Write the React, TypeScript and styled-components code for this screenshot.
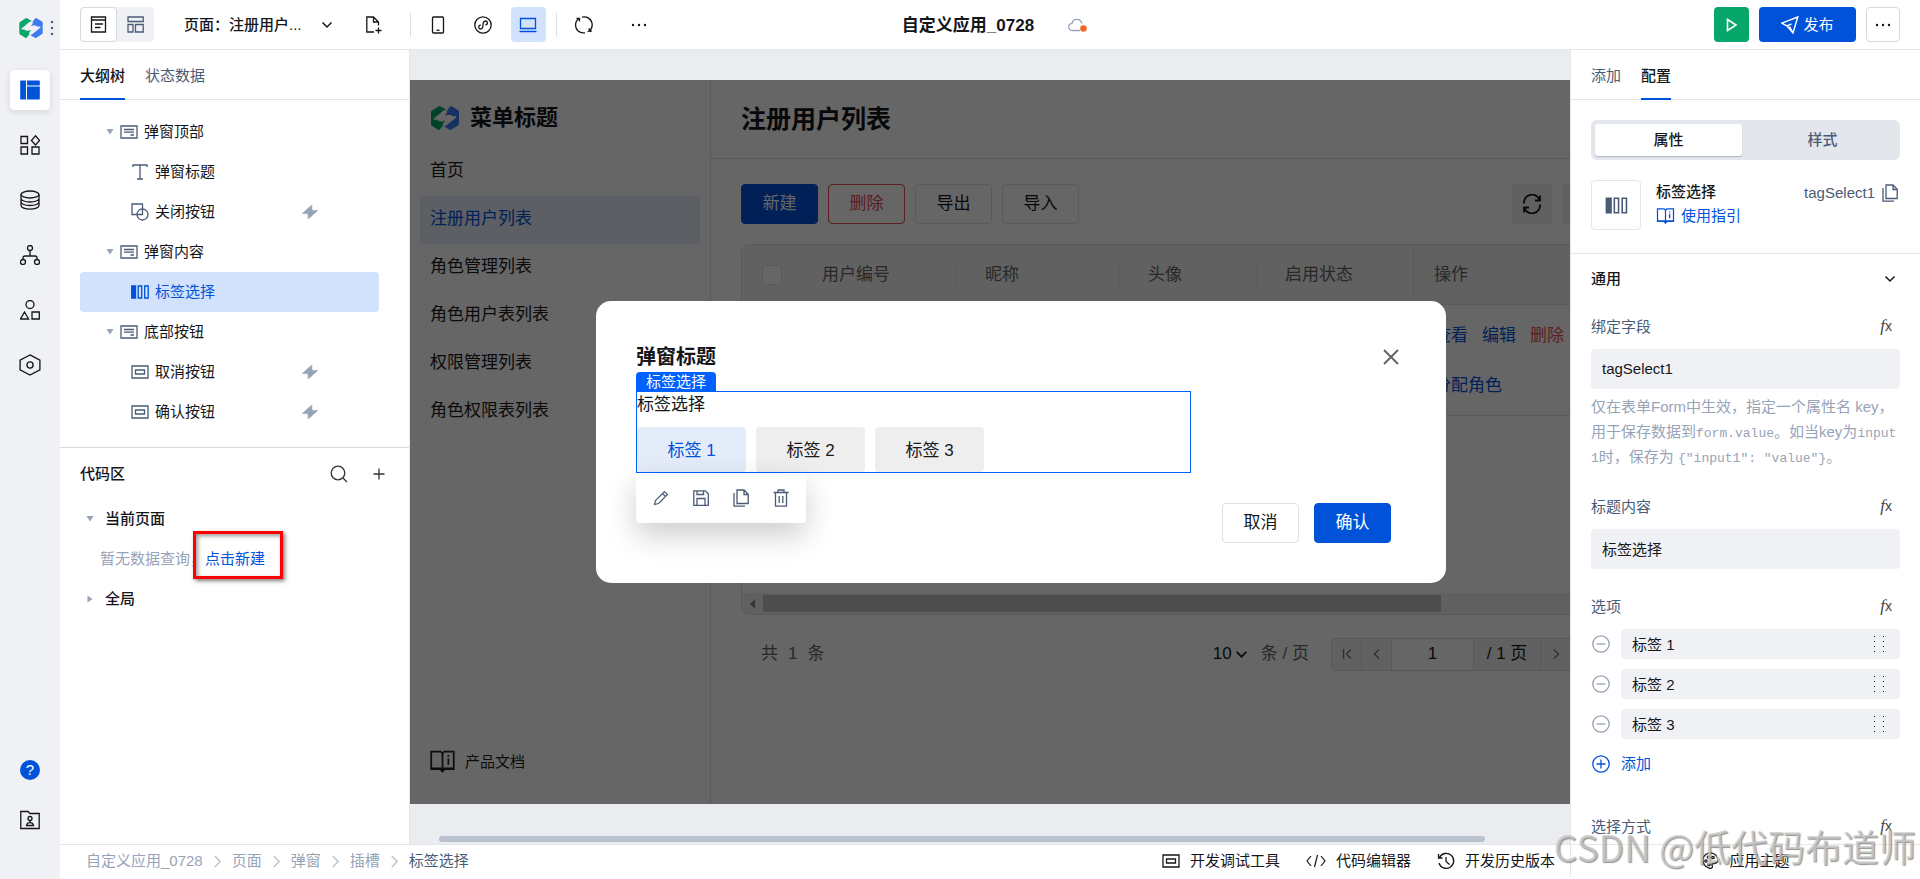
import React, { ReactNode } from 'react';
import styled, { createGlobalStyle, css } from 'styled-components';

const blue = '#0052d9';
const ink = '#14161a';
const slate = '#4b5b76';
const mute = '#97a3b7';
const line = '#e3e6eb';
const appLine = '#e0e0e0';
const canvasText = '17px';

const GlobalStyle = createGlobalStyle`
  *, *::before, *::after { box-sizing: border-box; }
  body {
    margin: 0;
    background: #fff;
    color: ${ink};
    font: 15px/20px 'Liberation Sans', 'Noto Sans CJK SC', sans-serif;
  }
  button, input, select { font: inherit; color: inherit; margin: 0; padding: 0; border: 0; background: none; outline: 0; }
  button { cursor: pointer; }
  a { color: ${blue}; text-decoration: none; }
  h1, h2, h3, p, ul { margin: 0; padding: 0; font: inherit; }
  ul { list-style: none; }
  svg { display: block; flex: none; }
`;

/* ---------- icons ---------- */

type IconProps = { w?: number; h?: number; box?: string; sw?: number; color?: string; children: ReactNode };
const Icon = ({ w = 20, h = 20, box = '0 0 20 20', sw = 1.3, color = 'currentColor', children }: IconProps) => (
  <svg width={w} height={h} viewBox={box} fill="none" stroke={color} strokeWidth={sw} aria-hidden="true">
    {children}
  </svg>
);

const leaf = 'M0 6Q0 5.200.8 4.700L7.500.4Q8.600-.2 9.800.5L15 3.600Q12 4.500 9.500 7L3 12.200Q2 13.200 3.300 14L12.500 18.800 9 23.300Q8 24.400 6.700 23.500L.8 19.800Q0 19.200 0 18.400Z';
const Logo = ({ w, h }: { w: number; h: number }) => (
  <svg width={w} height={h} viewBox="0 0 28 24" aria-hidden="true">
    <path fill="#07a66b" d={leaf} />
    <path fill="#3b7bf0" transform="rotate(180 14 12)" d={leaf} />
    <path fill="#07a66b" d="M3.500 14.200 8.500 10.500Q10 9.800 10.500 11L12.500 18.800Z" opacity="0" />
    <path fill="#3b7bf0" d="M20.200.3 25 9.800 22.500 10.500Q19 7.500 15.200 9.300L13.800 9.800Z" />
    <path fill="#07a66b" d="M7.800 23.700 3 14.200 5.500 13.500Q9 16.500 12.800 14.700L14.200 14.200Z" />
  </svg>
);

const LayoutIcon = () => (
  <svg width="20" height="20" viewBox="0 0 20 20" fill={blue} aria-hidden="true">
    <path d="M1 .5h5v19H1a.8.8 0 0 1-.8-.8V1.3A.8.8 0 0 1 1 .5ZM7 .5h12a.8.8 0 0 1 .8.8v4.200H7ZM7 6.500h12.800v12.200a.8.8 0 0 1-.8.8H7Z" />
  </svg>
);
const BlocksIcon = () => (
  <Icon><path d="M1 1.500h6.500V8.500H1ZM1 12h6.500v7H1ZM12 12h7v7h-7ZM15.500.8 19.600 5.500 15.500 10 11.400 5.500Z" /></Icon>
);
const DatabaseIcon = () => (
  <Icon><ellipse cx="10" cy="4.500" rx="9" ry="3.500" /><path d="M1 4.500v11c0 2 4 3.600 9 3.600s9-1.600 9-3.600v-11M1 8.500c0 2 4 3.500 9 3.500s9-1.500 9-3.500M1 12c0 2 4 3.500 9 3.500s9-1.500 9-3.500" /></Icon>
);
const FlowIcon = () => (
  <Icon><circle cx="10" cy="3" r="2.500" /><circle cx="3" cy="17" r="2.500" /><circle cx="17" cy="17" r="2.500" /><path d="M10 5.500V11M3 14.500V13q0-2 2-2h10q2 0 2 2v1.500" /></Icon>
);
const ShapesIcon = () => (
  <Icon><circle cx="10" cy="4.500" r="4" /><path d="M4.500 12 8.600 19H.5ZM12 12h7.300v7H12Z" /></Icon>
);
const HexIcon = () => (
  <Icon w={22} h={22} sw={1.200}><path d="M10 .8 19 5.500v9L10 19.200 1 14.500v-9Z" /><circle cx="10" cy="10" r="2.800" /></Icon>
);
const FolderUserIcon = () => (
  <Icon><path d="M.8 1.500H8l2 2h9.200v15H.8Z" /><circle cx="10" cy="8.500" r="2" /><path d="M10 10.500v2M6.500 15.500q.5-2.800 3.500-2.800t3.500 2.800Z" /></Icon>
);
const PageIcon = () => (
  <Icon w={17} h={17} box="0 0 17 17"><path d="M1.500 1h14v15h-14ZM1.500 4h14M5 8h8M5 11.500h5.500" /></Icon>
);
const GridIcon = () => (
  <Icon w={17} h={17} box="0 0 17 17"><path d="M1 1h15.200v4.500H1ZM1 8.500h5v7.500H1ZM8.500 8.500h7.700v7.500H8.500Z" /></Icon>
);
const ChevronDown = ({ size = 12, sw = 1.5 }: { size?: number; sw?: number }) => (
  <Icon w={size} h={size} box="0 0 12 12" sw={sw}><path d="M1.500 3.500 6 8l4.500-4.500" /></Icon>
);
const FilePlusIcon = () => (
  <Icon w={18} h={18} box="0 0 18 18"><path d="M9 16H1.800V1H8.500l5 5v3.500M8.500 1v5h5M13.500 11.500v6M10.500 14.500h6" /></Icon>
);
const PhoneIcon = () => (
  <Icon w={14} h={18} box="0 0 14 18"><rect x="1.500" y="1" width="11" height="16" rx="1" /><path d="M5.500 14.300h3" /></Icon>
);
const MiniAppIcon = () => (
  <Icon w={18} h={18} box="0 0 18 18"><circle cx="9" cy="9" r="8.200" /><path d="M6.700 9C3.800 9.500 4.300 13 6.500 13S9 11 9 9s.3-4 2.500-4 2.800 3.500 0 4" /></Icon>
);
const LaptopIcon = () => (
  <Icon w={18} h={16} box="0 0 18 16" color={blue}><path d="M1.500 1.500h15v10h-15ZM.5 14.500h17" /></Icon>
);
const SyncIcon = () => (
  <Icon w={20} h={18} box="0 0 20 18"><path d="M6 16.200A8 8 0 0 1 5 2.500M2.500 2.500H5.500V5.500M8 1.200A8 8 0 0 1 17 13M14 1.800A8 8 0 0 1 15 15.200L17.800 15M15.200 15.500V12.300M6 16.200Q8 17.200 11 16.800" /></Icon>
);
const DotsIcon = () => (
  <svg width="18" height="4" viewBox="0 0 18 4" fill="currentColor" aria-hidden="true"><circle cx="3" cy="2" r="1.200" /><circle cx="9" cy="2" r="1.200" /><circle cx="15" cy="2" r="1.200" /></svg>
);
const VDotsIcon = () => (
  <svg width="4" height="16" viewBox="0 0 4 16" fill={slate} aria-hidden="true"><circle cx="2" cy="2" r="1.200" /><circle cx="2" cy="8" r="1.200" /><circle cx="2" cy="14" r="1.200" /></svg>
);
const CloudIcon = () => (
  <Icon w={20} h={16} box="0 0 20 16" color={mute}><path d="M12 12.500H4.500a3.600 3.600 0 0 1-.5-7.200A5 5 0 0 1 13.800 5.500" /><circle cx="15.500" cy="10.500" r="3.300" fill="#ee6a29" stroke="none" /></Icon>
);
const PlayIcon = () => <Icon w={12} h={16} box="0 0 12 16" sw={1.600}><path d="M1.500 2.500 10 8l-8.500 5.500Z" /></Icon>;
const SendIcon = () => <Icon w={18} h={18} box="0 0 18 18" sw={1.400}><path d="M16.800 1 .8 7.200l5 2.600L12 17ZM5.800 9.800 10.500 8M16.800 1 12 17 8.500 10.500" /></Icon>;
const CaretIcon = ({ right }: { right?: boolean }) => (
  <svg width="8" height="8" viewBox="0 0 8 8" fill={mute} aria-hidden="true"><path d={right ? 'M1.500.5 6.500 4 1.500 7.500Z' : 'M.5 1h7L4 6.500Z'} /></svg>
);
const ContainerIcon = () => <Icon w={18} h={14} box="0 0 18 14" color={slate}><path d="M1 1h16v12H1ZM4 4.500h10M4 7.200h10M10.500 10h3.500" /></Icon>;
const TextIcon = () => <Icon w={18} h={18} box="0 0 18 18" color={slate}><path d="M2 4V2h14v2M9 2v14M6 16h6" /></Icon>;
const ShapeBtnIcon = () => <Icon w={18} h={18} box="0 0 18 18" color={slate}><path d="M1 1h10.500v10.500H1Z" /><circle cx="11.500" cy="11.500" r="5.500" /></Icon>;
const ButtonIcon = ({ color = slate }: { color?: string }) => <Icon w={18} h={14} box="0 0 18 14" color={color}><path d="M1 1h16v12H1ZM4.500 5h9v4h-9Z" /></Icon>;
const TagsIcon = ({ color = blue, w = 18, h = 14 }: { color?: string; w?: number; h?: number }) => (
  <Icon w={w} h={h} box="0 0 18 14" color={color}><path d="M.7 1h3.800v12H.7Z" fill={color} /><path d="M7.200 1h3.500v12H7.200ZM13.700 1h3.500v12h-3.500Z" /></Icon>
);
const BoltIcon = () => <svg width="16" height="14" viewBox="0 0 16 14" fill={mute} aria-hidden="true"><path d="M9.800 0 .3 8.600H6L6.200 14 15.700 5.400H10Z" stroke={mute} strokeWidth=".6" /></svg>;
const SearchIcon = () => <Icon w={18} h={18} box="0 0 18 18" color="#333"><circle cx="8" cy="8" r="6.800" /><path d="m13 13 4 4" /></Icon>;
const PlusIcon = () => <Icon w={12} h={12} box="0 0 12 12" color="#333"><path d="M6 .5v11M.5 6h11" /></Icon>;
const BookIcon = ({ w = 20, h = 18, sw = 1.400 }: { w?: number; h?: number; sw?: number }) => (
  <Icon w={w} h={h} sw={sw} box="0 0 20 18"><path d="M1 1h7.500L10 2.500 11.500 1H19v14h-7L10 17l-2-2H1ZM10 2.500V16M1 14.500h18M14.700 6.500v5M14.700 3.800v1.300" /></Icon>
);
const RefreshIcon = () => <Icon sw={1.800}><path d="M2 9.500A8 8 0 0 1 17.500 6M18 10.500A8 8 0 0 1 2.500 14M18 1.500V6.500H13M2 18.500V13.500H7" /></Icon>;
const CloseIcon = () => <Icon w={16} h={16} box="0 0 16 16" sw={2} color="#666"><path d="m1 1 14 14M15 1 1 15" /></Icon>;
const PencilIcon = () => <Icon w={16} h={16} box="0 0 16 16" sw={1.200} color={slate}><path d="M1.500 14.500 2.500 10.500 11.500 1.500 14.500 4.500 5.500 13.500ZM9.500 3.500l3 3" /></Icon>;
const SaveIcon = () => <Icon w={16} h={16} box="0 0 16 16" color={slate}><path d="M.8.8h11.500l3 3v11.500H.8ZM4 .8v3.700h6.500V.8M4 15.200V8.500h8v6.700" /></Icon>;
const CopyIcon = () => <Icon w={16} h={18} box="0 0 16 18" color={slate}><path d="M4 1h7l4.200 4.200v9.300H4ZM11 1v4.500h4.200M1 4v13.200h11" /></Icon>;
const TrashIcon = () => <Icon w={16} h={18} box="0 0 16 18" color={slate}><path d="M.5 3.500h15M2.500 3.500v13.700h11V3.500M5 3.500V1h6v2.500M6.200 7v7M9.800 7v7" /></Icon>;
const MinusCircle = () => <Icon w={18} h={18} box="0 0 18 18" color={mute}><circle cx="9" cy="9" r="8.200" /><path d="M4.500 9h9" /></Icon>;
const PlusCircle = () => <Icon w={18} h={18} box="0 0 18 18" color={blue}><circle cx="9" cy="9" r="8.200" /><path d="M4.500 9h9M9 4.500v9" /></Icon>;
const GripIcon = () => (
  <svg width="12" height="18" viewBox="0 0 12 18" fill={ink} aria-hidden="true">
    {[1, 6, 11, 16].map(y => <path key={y} d={`M1 ${y}h1v1H1ZM10 ${y}h1v1h-1Z`} />)}
  </svg>
);
const CodeIcon = () => <Icon w={20} h={14} box="0 0 20 14" sw={1.200}><path d="M5 2 1 7l4 5M15 2l4 5-4 5M11.500 1l-3 12" /></Icon>;
const HistoryIcon = () => <Icon w={18} h={18} box="0 0 18 18"><path d="M2.500 5.500A7.500 7.500 0 1 1 2 11M1.500 2v4h4M9 5v4.500l3.500 3" /></Icon>;
const PaletteIcon = () => (
  <Icon w={18} h={18} box="0 0 18 18"><path d="M7 15.500A7.500 7.500 0 1 1 16.800 8c0 3-1.800 3.500-4 3.500-1.800 0-2.300 1-1.500 2.500.8 2-1.800 3.500-4.300 1.500" /><circle cx="5" cy="9" r="1.200" /><circle cx="7.500" cy="5" r="1.200" /><circle cx="12" cy="5.500" r="1.200" /><circle cx="8" cy="12.500" r="1.200" /></Icon>
);
const ArrowIcon = ({ d }: { d: string }) => <Icon w={10} h={12} box="0 0 10 12" sw={1.400}><path d={d} /></Icon>;

/* ---------- shell ---------- */

const Shell = styled.div`
  display: flex;
  height: 100vh;
  overflow: hidden;
  position: relative;
`;
const Rail = styled.nav`
  flex: 0 0 60px;
  display: flex;
  flex-direction: column;
  align-items: center;
  gap: 15px;
  padding-bottom: 39px;
  background: #f0f1f5;
`;
const RailLogo = styled.a`
  display: flex;
  align-items: center;
  gap: 7px;
  height: 55px;
  padding-left: 12px;
`;
const RailButton = styled.button<{ $active?: boolean }>`
  display: flex;
  align-items: center;
  justify-content: center;
  width: 40px;
  height: 40px;
  border-radius: 4px;
  ${p => p.$active && css`
    background: #fff;
    box-shadow: 0 2px 6px rgba(20, 30, 60, 0.12);
  `}
`;
const RailFoot = styled.div`
  display: flex;
  flex-direction: column;
  gap: 10px;
  margin-top: auto;
`;
const HelpDot = styled.span`
  width: 20px;
  height: 20px;
  border-radius: 50%;
  background: ${blue};
  color: #fff;
  text-align: center;
`;
const Main = styled.div`
  flex: 1;
  min-width: 0;
  display: flex;
  flex-direction: column;
`;

/* ---------- top bar ---------- */

const TopBar = styled.header`
  flex: 0 0 50px;
  display: grid;
  grid-template-columns: 1fr auto 1fr;
  align-items: center;
  padding: 0 20px;
  border-bottom: 1px solid ${line};
`;
const BarGroup = styled.div<{ $end?: boolean }>`
  display: flex;
  align-items: center;
  gap: 10px;
  justify-content: ${p => (p.$end ? 'flex-end' : 'flex-start')};
`;
const DeviceGroup = styled.div`
  display: flex;
  align-items: center;
  gap: 10px;
  margin: 0 10px 0 8px;
`;
const ViewToggle = styled.div`
  display: flex;
  border-radius: 4px;
  background: #f0f1f5;
  margin-right: 20px;
`;
const ToggleButton = styled.button<{ $active?: boolean }>`
  display: flex;
  align-items: center;
  justify-content: center;
  width: 37px;
  height: 35px;
  border-radius: 4px;
  color: ${slate};
  ${p => p.$active && css`
    color: ${ink};
    background: #fff;
    border: 1px solid #d5d9e1;
  `}
`;
const PagePicker = styled.button`
  display: flex;
  align-items: center;
  gap: 19px;
  font-weight: 500;
  margin-right: 14px;
`;
const ToolButton = styled.button<{ $active?: boolean }>`
  display: flex;
  align-items: center;
  justify-content: center;
  width: 35px;
  height: 35px;
  border-radius: 4px;
  background: ${p => (p.$active ? '#d2e2fc' : 'none')};
`;
const Separator = styled.span`
  width: 1px;
  height: 24px;
  background: #dcdfe6;
`;
const AppName = styled.div`
  display: flex;
  align-items: center;
  gap: 34px;
  padding: 2px 0 0 10px;
  h1 { font-size: 17px; line-height: 24px; font-weight: 700; }
`;
const RunButton = styled.button`
  display: flex;
  align-items: center;
  justify-content: center;
  width: 35px;
  height: 35px;
  border-radius: 4px;
  background: #07a66b;
  color: #fff;
`;
const PublishButton = styled.button`
  display: flex;
  align-items: center;
  justify-content: center;
  gap: 4px;
  width: 97px;
  height: 35px;
  border-radius: 4px;
  background: ${blue};
  color: #fff;
`;
const MoreButton = styled.button`
  display: flex;
  align-items: center;
  justify-content: center;
  width: 34px;
  height: 35px;
  border: 1px solid #d5d9e1;
  border-radius: 4px;
`;

/* ---------- side panels ---------- */

const Body = styled.div`
  flex: 1;
  min-height: 0;
  display: flex;
`;
const LeftPanel = styled.aside`
  flex: 0 0 350px;
  border-right: 1px solid ${line};
  overflow: hidden;
`;
const RightPanel = styled.aside`
  flex: 0 0 350px;
  border-left: 1px solid ${line};
  overflow: hidden;
`;
const TabBar = styled.div`
  display: flex;
  gap: 20px;
  height: 50px;
  padding: 0 20px;
  border-bottom: 1px solid ${line};
`;
const Tab = styled.button<{ $active?: boolean }>`
  height: 50px;
  padding-top: 3px;
  color: ${p => (p.$active ? ink : slate)};
  font-weight: ${p => (p.$active ? 500 : 400)};
  border-bottom: 2px solid ${p => (p.$active ? blue : 'transparent')};
`;
const Tree = styled.ul`
  padding: 12px 30px 15px 20px;
  border-bottom: 1px solid #d5d9e1;
`;
const TreeRow = styled.li<{ $active?: boolean; $child?: boolean }>`
  display: flex;
  align-items: center;
  gap: 6px;
  height: 40px;
  padding: 0 61px 0 ${p => (p.$child ? 51 : 26)}px;
  border-radius: 4px;
  ${p => p.$active && css`
    background: #d2e2fc;
    color: ${blue};
  `}
  span { flex: 1; }
`;
const CodeHead = styled.div`
  display: flex;
  align-items: center;
  height: 51px;
  padding: 0 24px 0 20px;
  h2 { flex: 1; font-weight: 500; }
  button + button { margin-left: 25px; }
`;
const CodeRow = styled.div<{ $indent?: boolean }>`
  display: flex;
  align-items: center;
  gap: 11px;
  height: 40px;
  padding-left: ${p => (p.$indent ? 40 : 26)}px;
  font-weight: 500;
`;
const EmptyNote = styled.p`
  display: flex;
  font-weight: 400;
  color: ${mute};
`;
const Highlight = styled.span`
  position: relative;
  &::after {
    content: '';
    position: absolute;
    inset: -18px -18px -10px -12px;
    border: 3px solid #f00;
    box-shadow: 2px 2px 4px rgba(0, 0, 0, 0.5), inset 2px 2px 4px rgba(0, 0, 0, 0.4);
    pointer-events: none;
  }
`;

/* ---------- canvas ---------- */

const Canvas = styled.main`
  flex: 1;
  min-width: 0;
  display: flex;
  flex-direction: column;
  padding-top: 30px;
  background: #ebecf0;
  overflow: hidden;
`;
const Frame = styled.div`
  flex: 1;
  min-height: 0;
  width: calc(100% + 62px);
  position: relative;
  display: flex;
  background: #fff;
  font-size: ${canvasText};
`;
const CanvasScroll = styled.div`
  flex: 0 0 40px;
  display: flex;
  align-items: flex-end;
  padding: 0 85px 2px 29px;
  &::after {
    content: '';
    flex: 1;
    height: 6px;
    border-radius: 3px;
    background: #b9c2ce;
  }
`;
const AppMenu = styled.nav`
  flex: 0 0 301px;
  display: flex;
  flex-direction: column;
  padding: 8px 10px 30px;
  border-right: 1px solid ${appLine};
`;
const AppBrand = styled.div`
  display: flex;
  align-items: center;
  gap: 11px;
  height: 60px;
  padding-left: 11px;
  font-size: 22px;
  font-weight: 700;
`;
const MenuLink = styled.a<{ $active?: boolean }>`
  display: block;
  height: 48px;
  padding: 0 10px;
  line-height: 45px;
  border-radius: 4px;
  color: ${p => (p.$active ? blue : '#1a1a1a')};
  background: ${p => (p.$active ? '#e6eefb' : 'none')};
`;
const DocLink = styled.a`
  display: flex;
  align-items: center;
  gap: 10px;
  margin-top: auto;
  padding-left: 10px;
  font-size: 15px;
  color: #222;
`;
const AppPage = styled.section`
  flex: 1;
  min-width: 0;
`;
const PageTitle = styled.h2`
  height: 79px;
  padding: 0 30px;
  border-bottom: 1px solid ${appLine};
  font-size: 25px;
  font-weight: 700;
  line-height: 78px;
`;
const PageBody = styled.div`
  padding: 25px 30px;
`;
const Toolbar = styled.div`
  display: flex;
  gap: 10px;
  margin-bottom: 20px;
`;
const Btn = styled.button<{ $tone?: 'primary' | 'danger' }>`
  width: 77px;
  height: 40px;
  border: 1px solid ${appLine};
  border-radius: 4px;
  font-size: ${canvasText};
  ${p => p.$tone === 'primary' && css`background: ${blue}; border-color: ${blue}; color: #fff;`}
  ${p => p.$tone === 'danger' && css`border-color: #e34d59; color: #e34d59;`}
`;
const SquareBtn = styled.button`
  display: flex;
  align-items: center;
  justify-content: center;
  width: 40px;
  height: 40px;
  border-radius: 4px;
  background: #f1f1f1;
`;
const Push = styled.div`
  display: flex;
  gap: 10px;
  margin-left: auto;
`;
const TableBox = styled.div`
  display: flex;
  flex-direction: column;
  min-height: 371px;
  border: 1px solid ${appLine};
  border-radius: 8px;
  overflow: hidden;
`;
const Table = styled.table`
  width: 100%;
  table-layout: fixed;
  border-collapse: separate;
  border-spacing: 0;
`;
const Th = styled.th<{ $w?: number; $fixed?: boolean }>`
  width: ${p => (p.$w ? `${p.$w}px` : 'auto')};
  height: 60px;
  padding: 0;
  text-align: left;
  font-weight: 400;
  color: #666;
  background: #f3f3f3;
  border-bottom: 1px solid ${appLine};
  border-left: ${p => (p.$fixed ? `1px solid ${appLine}` : '0')};
`;
const ThInner = styled.div<{ $line?: boolean; $pad?: number }>`
  display: flex;
  align-items: center;
  height: 31px;
  padding-left: ${p => p.$pad ?? 28}px;
  border-right: ${p => (p.$line ? '1px solid #e6e6e6' : '0')};
`;
const Td = styled.td<{ $fixed?: boolean }>`
  height: 111px;
  padding: 0 20px;
  border-bottom: 1px solid ${appLine};
  border-left: ${p => (p.$fixed ? `1px solid ${appLine}` : '0')};
`;
const Actions = styled.div`
  display: flex;
  flex-wrap: wrap;
  column-gap: 14px;
  row-gap: 30px;
  padding-top: 2px;
`;
const ActionLink = styled.a<{ $danger?: boolean }>`
  color: ${p => (p.$danger ? '#e34d59' : blue)};
`;
const Check = styled.input`
  appearance: none;
  display: block;
  width: 20px;
  height: 20px;
  background: #fff;
  border: 1px solid ${appLine};
  border-radius: 3px;
`;
const TableScroll = styled.div`
  display: flex;
  align-items: center;
  gap: 8px;
  height: 21px;
  margin-top: auto;
  padding: 0 160px 0 8px;
  background: #f1f1f1;
  &::after {
    content: '';
    flex: 1;
    height: 17px;
    background: #c1c1c1;
  }
`;
const Pager = styled.div`
  display: flex;
  align-items: center;
  height: 34px;
  margin-top: 22px;
  padding-left: 20px;
  color: #666;
`;
const Total = styled.span`
  flex: 1;
  display: flex;
  gap: 10px;
`;
const SizeSelect = styled.label`
  display: flex;
  align-items: center;
  gap: 2px;
  margin-right: 22px;
  color: #1a1a1a;
  select { appearance: none; width: 20px; }
  span { margin-left: 11px; color: #666; }
`;
const PageNav = styled.div`
  display: flex;
  height: 33px;
  border: 1px solid #dadada;
  border-radius: 4px;
  background: #f3f3f3;
  color: #1a1a1a;
`;
const PageCell = styled.button`
  display: flex;
  align-items: center;
  justify-content: center;
  width: 30px;
  color: #777;
  border-right: 1px solid #dadada;
  &:last-child { border: 0; }
`;
const PageInput = styled.input`
  width: 81px;
  text-align: center;
  background: #fff;
`;
const PageCount = styled.span`
  display: flex;
  align-items: center;
  justify-content: center;
  width: 68px;
  border-left: 1px solid #dadada;
  border-right: 1px solid #dadada;
`;

/* ---------- dialog ---------- */

const Mask = styled.div`
  position: absolute;
  inset: 0;
  display: flex;
  align-items: center;
  justify-content: center;
  background: rgba(0, 0, 0, 0.6);
`;
const Dialog = styled.div`
  width: 850px;
  padding: 40px;
  border-radius: 15px;
  background: #fff;
`;
const DialogHead = styled.div`
  display: flex;
  justify-content: space-between;
  align-items: center;
  height: 32px;
  margin-bottom: 18px;
  padding-right: 7px;
  h3 { font-size: 20px; line-height: 32px; font-weight: 700; }
`;
const Selected = styled.div`
  position: relative;
  width: 555px;
  height: 82px;
  border: 1px solid #0061ff;
`;
const SelectedTag = styled.span`
  position: absolute;
  left: -1px;
  bottom: 100%;
  height: 20px;
  padding: 0 10px;
  line-height: 19px;
  border-radius: 4px 4px 0 0;
  background: #0061ff;
  color: #fff;
  font-size: 15px;
`;
const SelectedTools = styled.div`
  position: absolute;
  left: -1px;
  top: calc(100% + 1px);
  display: flex;
  width: 170px;
  height: 50px;
  padding: 0 5px;
  background: #fff;
  border-radius: 0 0 4px 4px;
  box-shadow: 0 12px 30px rgba(0, 0, 0, 0.2);
  button {
    width: 40px;
    display: flex;
    align-items: center;
    justify-content: center;
  }
`;
const FieldTitle = styled.p`
  line-height: 26px;
  margin-bottom: 9px;
`;
const Tags = styled.div`
  display: flex;
  gap: 10px;
`;
const Tag = styled.button<{ $active?: boolean }>`
  width: 109px;
  height: 45px;
  padding-top: 2px;
  border-radius: 4px;
  font-size: ${canvasText};
  color: ${p => (p.$active ? blue : '#1a1a1a')};
  background: ${p => (p.$active ? '#e5ecf9' : '#eee')};
`;
const DialogFoot = styled.div`
  display: flex;
  justify-content: flex-end;
  gap: 15px;
  margin-top: 30px;
  padding-right: 15px;
`;

/* ---------- properties ---------- */

const Segments = styled.div`
  display: flex;
  height: 40px;
  margin: 20px;
  padding: 4px;
  border-radius: 6px;
  background: #e3e6eb;
`;
const Segment = styled.button<{ $active?: boolean }>`
  flex: ${p => (p.$active ? '0 0 147px' : 1)};
  height: 32px;
  border-radius: 3px;
  color: ${p => (p.$active ? ink : slate)};
  font-weight: 500;
  ${p => p.$active && css`
    background: #fff;
    box-shadow: 0 1px 1px rgba(75, 91, 118, 0.35);
  `}
  & + & { margin-left: 7px; }
`;
const Summary = styled.div`
  display: flex;
  gap: 15px;
  height: 74px;
  padding: 0 20px;
  border-bottom: 1px solid ${line};
`;
const Thumb = styled.div`
  display: flex;
  align-items: center;
  justify-content: center;
  width: 50px;
  height: 50px;
  border: 1px solid ${line};
  border-radius: 4px;
`;
const SummaryText = styled.div`
  flex: 1;
  line-height: 24px;
  h2 { font-weight: 500; }
`;
const GuideLink = styled.a`
  display: flex;
  align-items: center;
  gap: 6px;
`;
const CompId = styled.div`
  display: flex;
  align-items: center;
  gap: 7px;
  height: 25px;
  padding-right: 2px;
  color: ${slate};
`;
const GroupHead = styled.button`
  display: flex;
  align-items: center;
  justify-content: space-between;
  width: 100%;
  height: 50px;
  padding: 0 24px 0 20px;
  font-weight: 500;
`;
const Field = styled.div<{ $last?: boolean }>`
  padding: 13px 20px 0;
  margin-bottom: ${p => (p.$last ? 25 : 15)}px;
`;
const FieldHead = styled.div`
  display: flex;
  align-items: center;
  justify-content: space-between;
  height: 20px;
  margin-bottom: 12px;
  padding-right: 8px;
  color: ${slate};
`;
const Fx = styled.button`
  height: 22px;
  padding-bottom: 3px;
  color: #444;
  font-size: 14px;
  line-height: 18px;
  i { font: italic 17px/18px 'Liberation Serif', serif; }
`;
const TextBox = styled.input`
  display: block;
  width: 100%;
  height: 40px;
  padding: 0 11px 2px;
  border-radius: 4px;
  background: #f0f1f5;
`;
const Hint = styled.p`
  margin-top: 5px;
  line-height: 25px;
  color: ${mute};
  code {
    font: 13px 'Liberation Mono', monospace;
    word-break: break-all;
  }
`;
const OptionRow = styled.div`
  display: flex;
  align-items: center;
  gap: 11px;
  height: 30px;
  margin-bottom: 10px;
  padding-left: 1px;
`;
const OptionBox = styled.div`
  flex: 1;
  display: flex;
  align-items: center;
  height: 30px;
  padding: 0 15px 0 11px;
  border-radius: 4px;
  background: #f0f1f5;
  input { flex: 1; min-width: 0; height: 30px; padding-bottom: 2px; }
`;
const AddOption = styled.button`
  display: flex;
  align-items: center;
  gap: 11px;
  height: 30px;
  padding-left: 1px;
  color: ${blue};
`;

/* ---------- footer ---------- */

const Footer = styled.footer`
  flex: 0 0 35px;
  display: flex;
  padding-bottom: 2px;
  border-top: 1px solid ${line};
  line-height: 30px;
`;
const Crumbs = styled.nav`
  flex: 1;
  display: flex;
  align-items: center;
  gap: 8px;
  padding-left: 26px;
`;
const Crumb = styled.a<{ $last?: boolean }>`
  color: ${p => (p.$last ? slate : mute)};
`;
const FooterTools = styled.div`
  display: flex;
  gap: 26px;
  padding-right: 15px;
`;
const FooterButton = styled.button`
  display: flex;
  align-items: center;
  gap: 10px;
`;
const ThemeSlot = styled.div`
  flex: 0 0 350px;
  display: flex;
  justify-content: center;
  border-left: 1px solid ${line};
`;
const Watermark = styled.div`
  position: absolute;
  right: 4px;
  bottom: 11px;
  font: 37px/44px 'Noto Sans CJK SC', sans-serif;
  white-space: nowrap;
  color: rgba(205, 205, 205, 0.75);
  text-shadow: 1px 1px 1px rgba(100, 100, 100, 0.7);
  pointer-events: none;
`;

const tree = [
  { label: '弹窗顶部', icon: <ContainerIcon /> },
  { label: '弹窗标题', icon: <TextIcon />, child: true },
  { label: '关闭按钮', icon: <ShapeBtnIcon />, child: true, bolt: true },
  { label: '弹窗内容', icon: <ContainerIcon /> },
  { label: '标签选择', icon: <TagsIcon />, child: true, active: true },
  { label: '底部按钮', icon: <ContainerIcon /> },
  { label: '取消按钮', icon: <ButtonIcon />, child: true, bolt: true },
  { label: '确认按钮', icon: <ButtonIcon />, child: true, bolt: true },
];
const menu = ['首页', '注册用户列表', '角色管理列表', '角色用户表列表', '权限管理列表', '角色权限表列表'];
const columns: [string, number][] = [['用户编号', 163], ['昵称', 163], ['头像', 137], ['启用状态', 156]];
const rail = [<BlocksIcon />, <DatabaseIcon />, <FlowIcon />, <ShapesIcon />, <HexIcon />];
const railNames = ['组件', '数据', '流程', '素材', '设置'];
const crumbs = ['自定义应用_0728', '页面', '弹窗', '插槽', '标签选择'];
const options = ['标签 1', '标签 2', '标签 3'];

const FxButton = () => <Fx aria-label="表达式"><i>f</i>x</Fx>;

export default function App() {
  return (
    <Shell>
      <GlobalStyle />
      <Rail>
        <RailLogo href="#"><Logo w={24} h={20} /><VDotsIcon /></RailLogo>
        <RailButton $active aria-label="页面设计"><LayoutIcon /></RailButton>
        {rail.map((icon, i) => <RailButton key={i} aria-label={railNames[i]}>{icon}</RailButton>)}
        <RailFoot>
          <RailButton aria-label="帮助"><HelpDot>?</HelpDot></RailButton>
          <RailButton aria-label="资料"><FolderUserIcon /></RailButton>
        </RailFoot>
      </Rail>

      <Main>
        <TopBar>
          <BarGroup>
            <ViewToggle>
              <ToggleButton $active aria-label="页面"><PageIcon /></ToggleButton>
              <ToggleButton aria-label="布局"><GridIcon /></ToggleButton>
            </ViewToggle>
            <PagePicker>页面：注册用户...<ChevronDown /></PagePicker>
            <ToolButton aria-label="新建页面"><FilePlusIcon /></ToolButton>
            <DeviceGroup>
              <Separator />
              <ToolButton aria-label="手机"><PhoneIcon /></ToolButton>
              <ToolButton aria-label="小程序"><MiniAppIcon /></ToolButton>
              <ToolButton $active aria-label="电脑"><LaptopIcon /></ToolButton>
              <Separator />
              <ToolButton aria-label="同步"><SyncIcon /></ToolButton>
            </DeviceGroup>
            <ToolButton aria-label="更多工具"><DotsIcon /></ToolButton>
          </BarGroup>
          <AppName><h1>自定义应用_0728</h1><CloudIcon /></AppName>
          <BarGroup $end>
            <RunButton aria-label="预览"><PlayIcon /></RunButton>
            <PublishButton><SendIcon />发布</PublishButton>
            <MoreButton aria-label="更多"><DotsIcon /></MoreButton>
          </BarGroup>
        </TopBar>

        <Body>
          <LeftPanel>
            <TabBar>
              <Tab $active>大纲树</Tab>
              <Tab>状态数据</Tab>
            </TabBar>
            <Tree>
              {tree.map(n => (
                <TreeRow key={n.label} $child={n.child} $active={n.active}>
                  {!n.child && <CaretIcon />}
                  {n.icon}
                  <span>{n.label}</span>
                  {n.bolt && <BoltIcon />}
                </TreeRow>
              ))}
            </Tree>
            <CodeHead>
              <h2>代码区</h2>
              <button aria-label="搜索"><SearchIcon /></button>
              <button aria-label="新增"><PlusIcon /></button>
            </CodeHead>
            <CodeRow><CaretIcon />当前页面</CodeRow>
            <CodeRow $indent>
              <EmptyNote>暂无数据查询，<Highlight><a href="#">点击新建</a></Highlight></EmptyNote>
            </CodeRow>
            <CodeRow><CaretIcon right />全局</CodeRow>
          </LeftPanel>

          <Canvas>
            <Frame>
              <AppMenu>
                <AppBrand><Logo w={28} h={24} />菜单标题</AppBrand>
                {menu.map(m => <MenuLink key={m} href="#" $active={m === '注册用户列表'}>{m}</MenuLink>)}
                <DocLink href="#"><BookIcon w={25} h={25} />产品文档</DocLink>
              </AppMenu>
              <AppPage>
                <PageTitle>注册用户列表</PageTitle>
                <PageBody>
                  <Toolbar>
                    <Btn $tone="primary">新建</Btn>
                    <Btn $tone="danger">删除</Btn>
                    <Btn>导出</Btn>
                    <Btn>导入</Btn>
                    <Push>
                      <SquareBtn aria-label="刷新"><RefreshIcon /></SquareBtn>
                      <SquareBtn aria-label="列设置" />
                    </Push>
                  </Toolbar>
                  <TableBox>
                    <Table>
                      <thead>
                        <tr>
                          <Th $w={52}><ThInner $pad={20}><Check type="checkbox" aria-label="全选" /></ThInner></Th>
                          {columns.map(([name, w], i) => (
                            <Th key={name} $w={w}><ThInner $line={i < 3}>{name}</ThInner></Th>
                          ))}
                          <Th $fixed><ThInner $pad={20}>操作</ThInner></Th>
                        </tr>
                      </thead>
                      <tbody>
                        <tr>
                          <Td /><Td /><Td /><Td /><Td />
                          <Td $fixed>
                            <Actions>
                              <ActionLink href="#">查看</ActionLink>
                              <ActionLink href="#">编辑</ActionLink>
                              <ActionLink href="#" $danger>删除</ActionLink>
                              <ActionLink href="#">分配角色</ActionLink>
                            </Actions>
                          </Td>
                        </tr>
                      </tbody>
                    </Table>
                    <TableScroll>
                      <svg width="5" height="10" viewBox="0 0 5 10" fill="#888" aria-hidden="true"><path d="M5 0v10L0 5Z" /></svg>
                    </TableScroll>
                  </TableBox>
                  <Pager>
                    <Total><span>共</span><span>1</span><span>条</span></Total>
                    <SizeSelect>
                      <select defaultValue="10"><option>10</option></select>
                      <ChevronDown size={13} sw={1.6} />
                      <span>条 / 页</span>
                    </SizeSelect>
                    <PageNav>
                      <PageCell aria-label="首页"><ArrowIcon d="M1.500 1v10M9 1.500 4.500 6 9 10.500" /></PageCell>
                      <PageCell aria-label="上一页"><ArrowIcon d="M7 1.500 2.500 6 7 10.500" /></PageCell>
                      <PageInput defaultValue="1" aria-label="页码" />
                      <PageCount>/ 1 页</PageCount>
                      <PageCell aria-label="下一页"><ArrowIcon d="M3 1.500 7.500 6 3 10.500" /></PageCell>
                      <PageCell aria-label="末页"><ArrowIcon d="M8.500 1v10M1 1.500 5.500 6 1 10.500" /></PageCell>
                    </PageNav>
                  </Pager>
                </PageBody>
              </AppPage>
              <Mask>
                <Dialog role="dialog" aria-label="弹窗标题">
                  <DialogHead>
                    <h3>弹窗标题</h3>
                    <button aria-label="关闭"><CloseIcon /></button>
                  </DialogHead>
                  <Selected>
                    <SelectedTag>标签选择</SelectedTag>
                    <FieldTitle>标签选择</FieldTitle>
                    <Tags>
                      {options.map((o, i) => <Tag key={o} $active={i === 0}>{o}</Tag>)}
                    </Tags>
                    <SelectedTools>
                      <button aria-label="编辑"><PencilIcon /></button>
                      <button aria-label="保存"><SaveIcon /></button>
                      <button aria-label="复制"><CopyIcon /></button>
                      <button aria-label="删除"><TrashIcon /></button>
                    </SelectedTools>
                  </Selected>
                  <DialogFoot>
                    <Btn>取消</Btn>
                    <Btn $tone="primary">确认</Btn>
                  </DialogFoot>
                </Dialog>
              </Mask>
            </Frame>
            <CanvasScroll />
          </Canvas>

          <RightPanel>
            <TabBar>
              <Tab>添加</Tab>
              <Tab $active>配置</Tab>
            </TabBar>
            <Segments>
              <Segment $active>属性</Segment>
              <Segment>样式</Segment>
            </Segments>
            <Summary>
              <Thumb><TagsIcon color={slate} w={23} h={17} /></Thumb>
              <SummaryText>
                <h2>标签选择</h2>
                <GuideLink href="#"><BookIcon w={19} h={16} />使用指引</GuideLink>
              </SummaryText>
              <CompId>tagSelect1<CopyIcon /></CompId>
            </Summary>
            <GroupHead>通用<ChevronDown /></GroupHead>
            <Field>
              <FieldHead><label htmlFor="bind">绑定字段</label><FxButton /></FieldHead>
              <TextBox id="bind" defaultValue="tagSelect1" />
              <Hint>
                仅在表单Form中生效，指定一个属性名 key，用于保存数据到<code>form.value</code>。如当key为<code>input1</code>时，保存为 <code>{'{"input1": "value"}'}</code>。
              </Hint>
            </Field>
            <Field>
              <FieldHead><label htmlFor="title">标题内容</label><FxButton /></FieldHead>
              <TextBox id="title" defaultValue="标签选择" />
            </Field>
            <Field $last>
              <FieldHead><span>选项</span><FxButton /></FieldHead>
              {options.map(o => (
                <OptionRow key={o}>
                  <button aria-label={`移除${o}`}><MinusCircle /></button>
                  <OptionBox><input defaultValue={o} aria-label={o} /><GripIcon /></OptionBox>
                </OptionRow>
              ))}
              <AddOption><PlusCircle />添加</AddOption>
            </Field>
            <Field>
              <FieldHead><span>选择方式</span><FxButton /></FieldHead>
            </Field>
          </RightPanel>
        </Body>

        <Footer>
          <Crumbs>
            {crumbs.map((c, i) => (
              <React.Fragment key={c}>
                {i > 0 && <Icon w={13} h={13} box="0 0 12 12" color="#b9c2ce"><path d="M3.500 1 8.500 6l-5 5" /></Icon>}
                <Crumb href="#" $last={i === crumbs.length - 1}>{c}</Crumb>
              </React.Fragment>
            ))}
          </Crumbs>
          <FooterTools>
            <FooterButton><ButtonIcon color={ink} />开发调试工具</FooterButton>
            <FooterButton><CodeIcon />代码编辑器</FooterButton>
            <FooterButton><HistoryIcon />开发历史版本</FooterButton>
          </FooterTools>
          <ThemeSlot>
            <FooterButton><PaletteIcon />应用主题</FooterButton>
          </ThemeSlot>
        </Footer>
      </Main>
      <Watermark>CSDN @低代码布道师</Watermark>
    </Shell>
  );
}
